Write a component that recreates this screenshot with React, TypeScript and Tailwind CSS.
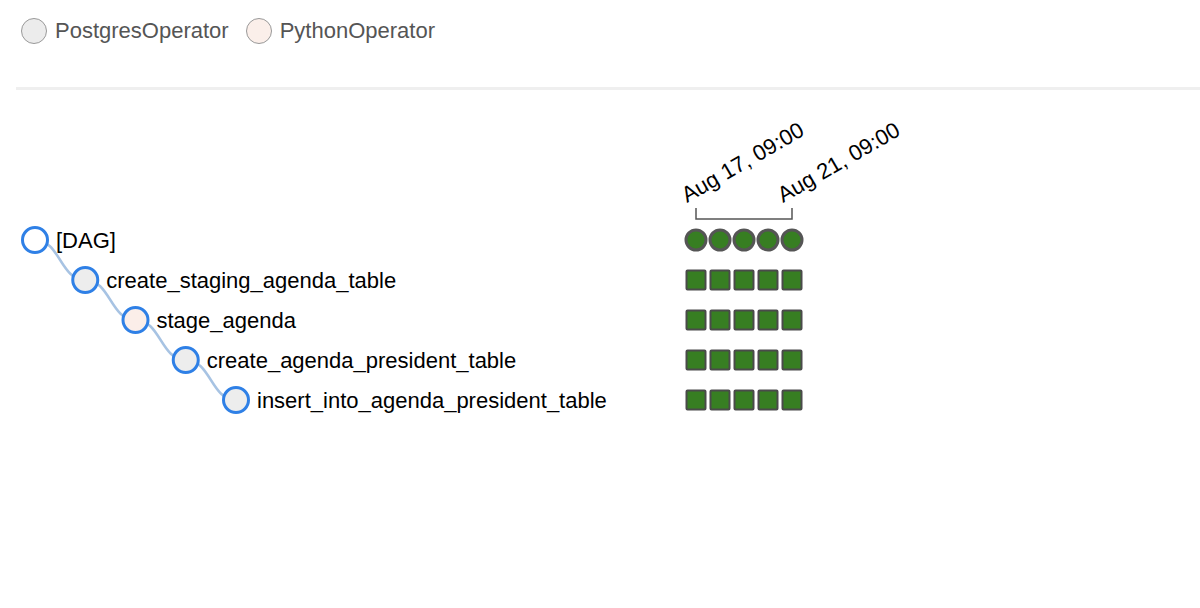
import React from 'react';

type Task = { label: string; fill: string; depth: number };

const tasks: Task[] = [
    { label: '[DAG]', fill: '#ffffff', depth: 0 },
    { label: 'create_staging_agenda_table', fill: '#ededed', depth: 1 },
    { label: 'stage_agenda', fill: '#fbeee9', depth: 2 },
    { label: 'create_agenda_president_table', fill: '#ededed', depth: 3 },
    { label: 'insert_into_agenda_president_table', fill: '#ededed', depth: 4 },
];

const FONT = '"Liberation Sans", Arial, Helvetica, sans-serif';
const GREEN = '#377e22';
const RUNS = [0, 1, 2, 3, 4];

const nodeX = (d: number) => 35 + d * 50.25;
const rowY = (i: number) => 240 + i * 40;
const cellX = (r: number) => 696 + r * 24;

function Legend() {
    return (
        <div className="flex items-center pt-[18px] pl-[21px] text-[22px] text-[#555] font-['Liberation_Sans',Arial,sans-serif]">
            <div className="w-[26px] h-[26px] rounded-full border-[1.5px] border-[#999] bg-[#ececec]" />
            <span className="ml-[8px] leading-[26px]">PostgresOperator</span>
            <div className="ml-[17px] w-[26px] h-[26px] rounded-full border-[1.5px] border-[#999] bg-[#fbefea]" />
            <span className="ml-[8px] leading-[26px]">PythonOperator</span>
        </div>
    );
}

function TreeView() {
    return (
        <svg width="1200" height="518" viewBox="0 90 1200 518" className="block" fontFamily={FONT}>
            {/* links */}
            {tasks.slice(1).map((t, i) => {
                const sx = nodeX(i), sy = rowY(i);
                const tx = nodeX(t.depth), ty = rowY(i + 1);
                const mx = (sx + tx) / 2;
                return (
                    <path
                        key={t.label}
                        d={`M${sx},${sy}C${mx},${sy} ${mx},${ty} ${tx},${ty}`}
                        fill="none"
                        stroke="#a7c3e3"
                        strokeWidth={2.5}
                    />
                );
            })}

            {/* nodes */}
            {tasks.map((t, i) => (
                <g key={t.label}>
                    <circle cx={nodeX(t.depth)} cy={rowY(i)} r={12.5} fill={t.fill} stroke="#2f80e6" strokeWidth={3} />
                    <text x={nodeX(t.depth) + 21} y={rowY(i) + 7.5} fontSize={22} fill="#000">
                        {t.label}
                    </text>
                </g>
            ))}

            {/* date axis */}
            <text x={687} y={203} fontSize={22} fill="#000" transform="rotate(-30 687 203)">
                Aug 17, 09:00
            </text>
            <text x={783} y={203} fontSize={22} fill="#000" transform="rotate(-30 783 203)">
                Aug 21, 09:00
            </text>
            <path d="M696,208V219H792V208" fill="none" stroke="#555" strokeWidth={1.5} />

            {/* dag runs */}
            {RUNS.map((r) => (
                <circle key={r} cx={cellX(r)} cy={240} r={10} fill={GREEN} stroke="#555" strokeWidth={3} />
            ))}

            {/* task instances */}
            {tasks.slice(1).map((t, i) =>
                RUNS.map((r) => (
                    <rect
                        key={t.label + r}
                        x={cellX(r) - 9.5}
                        y={rowY(i + 1) - 9.5}
                        width={19}
                        height={19}
                        rx={1}
                        fill={GREEN}
                        stroke="#4a4a4a"
                        strokeWidth={2}
                    />
                ))
            )}
        </svg>
    );
}

export default function App() {
    return (
        <div className="w-[1200px] h-[608px] bg-white overflow-hidden">
            <Legend />
            <div className="ml-4 mt-[43px] h-[3px] bg-[#efefef]" />
            <TreeView />
        </div>
    );
}
